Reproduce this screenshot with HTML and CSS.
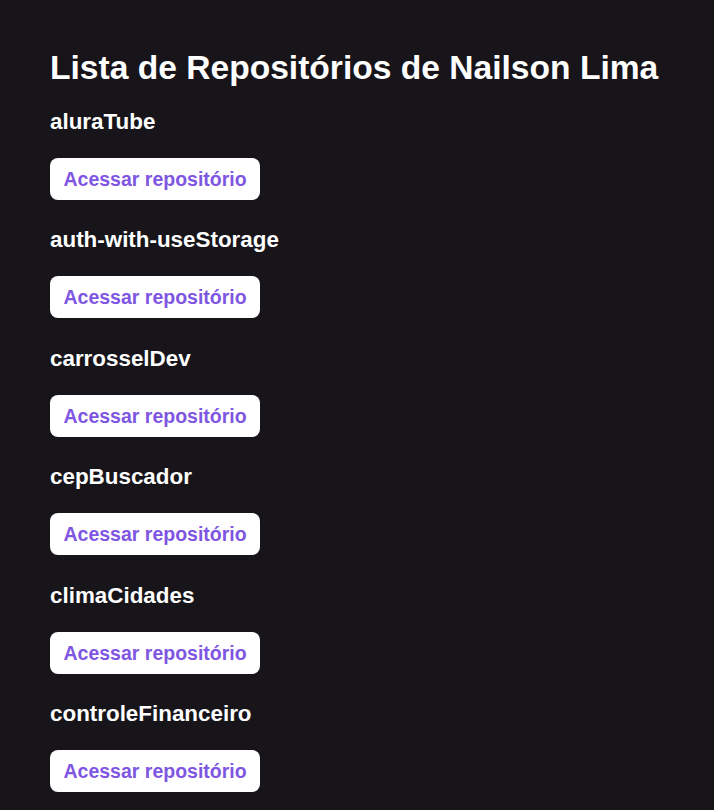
FILE: index.html
```html
<!DOCTYPE html>
<html lang="pt-BR">
<head>
<meta charset="utf-8">
<title>Repositórios</title>
<link rel="stylesheet" href="styles.css">
</head>
<body>
<main class="page">
  <h1 class="title">Lista de Repositórios de Nailson Lima</h1>
  <ul class="repos">
    <li class="repo"><h2 class="repo-name">aluraTube</h2><a class="repo-link" href="#">Acessar repositório</a></li>
    <li class="repo"><h2 class="repo-name">auth-with-useStorage</h2><a class="repo-link" href="#">Acessar repositório</a></li>
    <li class="repo"><h2 class="repo-name">carrosselDev</h2><a class="repo-link" href="#">Acessar repositório</a></li>
    <li class="repo"><h2 class="repo-name">cepBuscador</h2><a class="repo-link" href="#">Acessar repositório</a></li>
    <li class="repo"><h2 class="repo-name">climaCidades</h2><a class="repo-link" href="#">Acessar repositório</a></li>
    <li class="repo"><h2 class="repo-name">controleFinanceiro</h2><a class="repo-link" href="#">Acessar repositório</a></li>
  </ul>
</main>
</body>
</html>
```
FILE: styles.css
```css
html, body {
  margin: 0;
  background: #17151a;
  color: #ffffff;
  font-family: "Liberation Sans", Arial, sans-serif;
}
.page {
  padding: 48px 50px 20px;
}
.title {
  margin: 0;
  font-size: 33.6px;
  font-weight: 700;
  line-height: 39px;
  white-space: nowrap;
}
.repos {
  list-style: none;
  margin: 22px 0 0;
  padding: 0;
  display: flex;
  flex-direction: column;
  gap: 27.4px;
}
.repo {
  display: flex;
  flex-direction: column;
  align-items: flex-start;
}
.repo-name {
  margin: 0 0 23px;
  font-size: 22.4px;
  line-height: 26px;
  font-weight: 700;
}
.repo-link {
  display: inline-block;
  background: #ffffff;
  color: #7f56e2;
  font-size: 19.5px;
  line-height: 22px;
  font-weight: 700;
  text-decoration: none;
  padding: 10px 13.5px;
  border-radius: 8px;
}
```
